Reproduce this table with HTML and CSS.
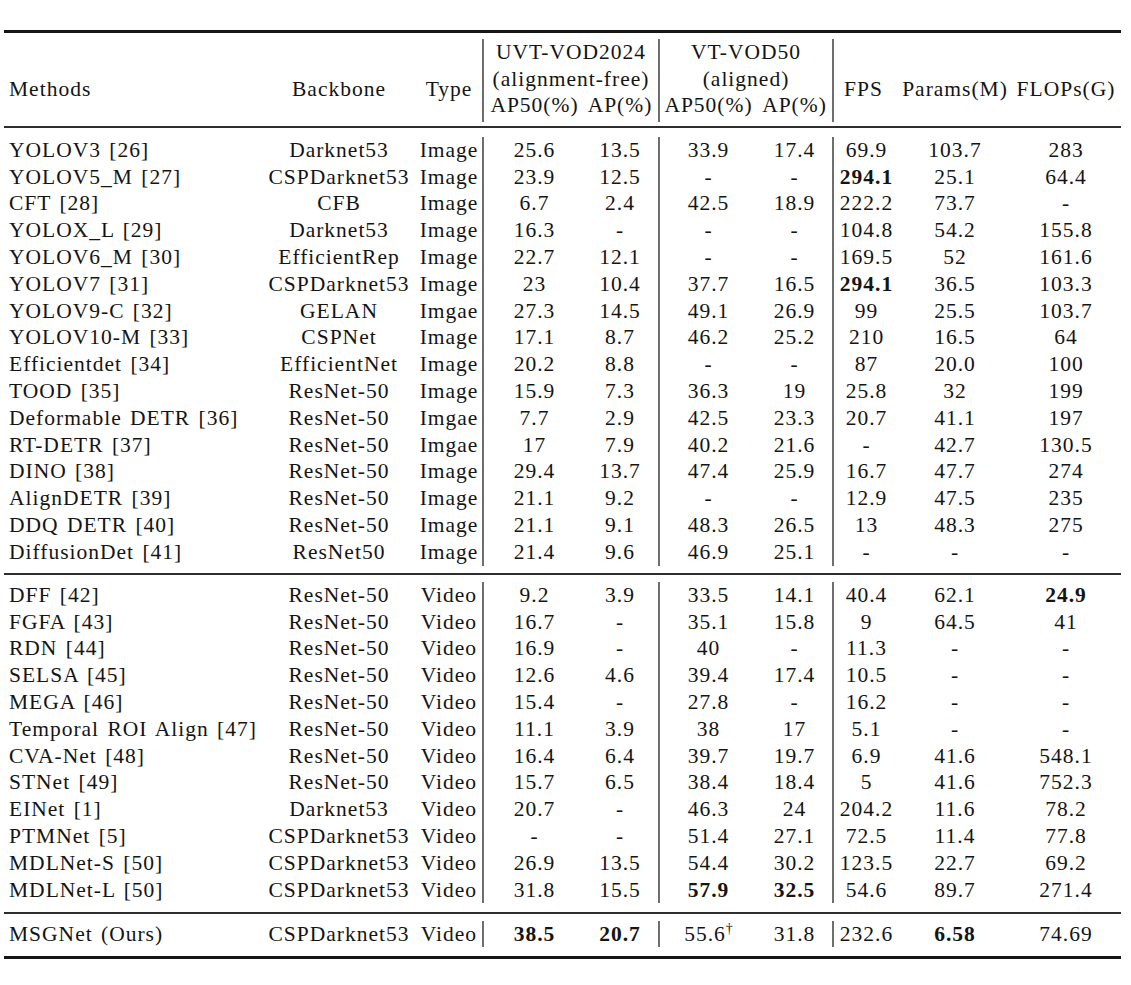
FILE: index.html
```html
<!DOCTYPE html>
<html lang="en">
<head>
<meta charset="utf-8">
<title>Comparison table</title>
<link rel="stylesheet" href="styles.css">
</head>
<body>
<div class="table">
  <div class="rule-heavy"></div>

  <div class="head">
    <div class="h-span c1">Methods</div>
    <div class="h-span c2">Backbone</div>
    <div class="h-span c3 vl">Type</div>
    <div class="h-grp g1 r1 vl">UVT-VOD2024</div>
    <div class="h-grp g1 r2 vl">(alignment-free)</div>
    <div class="h-sub c4 r3">AP50(%)</div>
    <div class="h-sub c5 r3 vl">AP(%)</div>
    <div class="h-grp g2 r1 vl">VT-VOD50</div>
    <div class="h-grp g2 r2 vl">(aligned)</div>
    <div class="h-sub c6 r3">AP50(%)</div>
    <div class="h-sub c7 r3 vl">AP(%)</div>
    <div class="h-span c8 fps">FPS</div>
    <div class="h-span c9">Params(M)</div>
    <div class="h-span c10">FLOPs(G)</div>
  </div>

  <div class="rule-mid"></div>

  <div class="section s-image">
    <div class="row"><div class="m">YOLOV3 [26]</div><div>Darknet53</div><div class="vl">Image</div><div>25.6</div><div class="vl ap">13.5</div><div>33.9</div><div class="vl">17.4</div><div>69.9</div><div>103.7</div><div>283</div></div>
    <div class="row"><div class="m">YOLOV5_M [27]</div><div>CSPDarknet53</div><div class="vl">Image</div><div>23.9</div><div class="vl ap">12.5</div><div>-</div><div class="vl">-</div><div class="b">294.1</div><div>25.1</div><div>64.4</div></div>
    <div class="row"><div class="m">CFT [28]</div><div>CFB</div><div class="vl">Image</div><div>6.7</div><div class="vl ap">2.4</div><div>42.5</div><div class="vl">18.9</div><div>222.2</div><div>73.7</div><div>-</div></div>
    <div class="row"><div class="m">YOLOX_L [29]</div><div>Darknet53</div><div class="vl">Image</div><div>16.3</div><div class="vl ap">-</div><div>-</div><div class="vl">-</div><div>104.8</div><div>54.2</div><div>155.8</div></div>
    <div class="row"><div class="m">YOLOV6_M [30]</div><div>EfficientRep</div><div class="vl">Image</div><div>22.7</div><div class="vl ap">12.1</div><div>-</div><div class="vl">-</div><div>169.5</div><div>52</div><div>161.6</div></div>
    <div class="row"><div class="m">YOLOV7 [31]</div><div>CSPDarknet53</div><div class="vl">Image</div><div>23</div><div class="vl ap">10.4</div><div>37.7</div><div class="vl">16.5</div><div class="b">294.1</div><div>36.5</div><div>103.3</div></div>
    <div class="row"><div class="m">YOLOV9-C [32]</div><div>GELAN</div><div class="vl">Imgae</div><div>27.3</div><div class="vl ap">14.5</div><div>49.1</div><div class="vl">26.9</div><div>99</div><div>25.5</div><div>103.7</div></div>
    <div class="row"><div class="m">YOLOV10-M [33]</div><div>CSPNet</div><div class="vl">Image</div><div>17.1</div><div class="vl ap">8.7</div><div>46.2</div><div class="vl">25.2</div><div>210</div><div>16.5</div><div>64</div></div>
    <div class="row"><div class="m">Efficientdet [34]</div><div>EfficientNet</div><div class="vl">Image</div><div>20.2</div><div class="vl ap">8.8</div><div>-</div><div class="vl">-</div><div>87</div><div>20.0</div><div>100</div></div>
    <div class="row"><div class="m">TOOD [35]</div><div>ResNet-50</div><div class="vl">Image</div><div>15.9</div><div class="vl ap">7.3</div><div>36.3</div><div class="vl">19</div><div>25.8</div><div>32</div><div>199</div></div>
    <div class="row"><div class="m">Deformable DETR [36]</div><div>ResNet-50</div><div class="vl">Imgae</div><div>7.7</div><div class="vl ap">2.9</div><div>42.5</div><div class="vl">23.3</div><div>20.7</div><div>41.1</div><div>197</div></div>
    <div class="row"><div class="m">RT-DETR [37]</div><div>ResNet-50</div><div class="vl">Imgae</div><div>17</div><div class="vl ap">7.9</div><div>40.2</div><div class="vl">21.6</div><div>-</div><div>42.7</div><div>130.5</div></div>
    <div class="row"><div class="m">DINO [38]</div><div>ResNet-50</div><div class="vl">Image</div><div>29.4</div><div class="vl ap">13.7</div><div>47.4</div><div class="vl">25.9</div><div>16.7</div><div>47.7</div><div>274</div></div>
    <div class="row"><div class="m">AlignDETR [39]</div><div>ResNet-50</div><div class="vl">Image</div><div>21.1</div><div class="vl ap">9.2</div><div>-</div><div class="vl">-</div><div>12.9</div><div>47.5</div><div>235</div></div>
    <div class="row"><div class="m">DDQ DETR [40]</div><div>ResNet-50</div><div class="vl">Image</div><div>21.1</div><div class="vl ap">9.1</div><div>48.3</div><div class="vl">26.5</div><div>13</div><div>48.3</div><div>275</div></div>
    <div class="row"><div class="m">DiffusionDet [41]</div><div>ResNet50</div><div class="vl">Image</div><div>21.4</div><div class="vl ap">9.6</div><div>46.9</div><div class="vl">25.1</div><div>-</div><div>-</div><div>-</div></div>
  </div>

  <div class="rule-mid"></div>

  <div class="section s-video">
    <div class="row"><div class="m">DFF [42]</div><div>ResNet-50</div><div class="vl">Video</div><div>9.2</div><div class="vl ap">3.9</div><div>33.5</div><div class="vl">14.1</div><div>40.4</div><div>62.1</div><div class="b">24.9</div></div>
    <div class="row"><div class="m">FGFA [43]</div><div>ResNet-50</div><div class="vl">Video</div><div>16.7</div><div class="vl ap">-</div><div>35.1</div><div class="vl">15.8</div><div>9</div><div>64.5</div><div>41</div></div>
    <div class="row"><div class="m">RDN [44]</div><div>ResNet-50</div><div class="vl">Video</div><div>16.9</div><div class="vl ap">-</div><div>40</div><div class="vl">-</div><div>11.3</div><div>-</div><div>-</div></div>
    <div class="row"><div class="m">SELSA [45]</div><div>ResNet-50</div><div class="vl">Video</div><div>12.6</div><div class="vl ap">4.6</div><div>39.4</div><div class="vl">17.4</div><div>10.5</div><div>-</div><div>-</div></div>
    <div class="row"><div class="m">MEGA [46]</div><div>ResNet-50</div><div class="vl">Video</div><div>15.4</div><div class="vl ap">-</div><div>27.8</div><div class="vl">-</div><div>16.2</div><div>-</div><div>-</div></div>
    <div class="row"><div class="m">Temporal ROI Align [47]</div><div>ResNet-50</div><div class="vl">Video</div><div>11.1</div><div class="vl ap">3.9</div><div>38</div><div class="vl">17</div><div>5.1</div><div>-</div><div>-</div></div>
    <div class="row"><div class="m">CVA-Net [48]</div><div>ResNet-50</div><div class="vl">Video</div><div>16.4</div><div class="vl ap">6.4</div><div>39.7</div><div class="vl">19.7</div><div>6.9</div><div>41.6</div><div>548.1</div></div>
    <div class="row"><div class="m">STNet [49]</div><div>ResNet-50</div><div class="vl">Video</div><div>15.7</div><div class="vl ap">6.5</div><div>38.4</div><div class="vl">18.4</div><div>5</div><div>41.6</div><div>752.3</div></div>
    <div class="row"><div class="m">EINet [1]</div><div>Darknet53</div><div class="vl">Video</div><div>20.7</div><div class="vl ap">-</div><div>46.3</div><div class="vl">24</div><div>204.2</div><div>11.6</div><div>78.2</div></div>
    <div class="row"><div class="m">PTMNet [5]</div><div>CSPDarknet53</div><div class="vl">Video</div><div>-</div><div class="vl ap">-</div><div>51.4</div><div class="vl">27.1</div><div>72.5</div><div>11.4</div><div>77.8</div></div>
    <div class="row"><div class="m">MDLNet-S [50]</div><div>CSPDarknet53</div><div class="vl">Video</div><div>26.9</div><div class="vl ap">13.5</div><div>54.4</div><div class="vl">30.2</div><div>123.5</div><div>22.7</div><div>69.2</div></div>
    <div class="row"><div class="m">MDLNet-L [50]</div><div>CSPDarknet53</div><div class="vl">Video</div><div>31.8</div><div class="vl ap">15.5</div><div class="b">57.9</div><div class="vl b">32.5</div><div>54.6</div><div>89.7</div><div>271.4</div></div>
  </div>

  <div class="rule-mid"></div>

  <div class="section s-ours">
    <div class="row"><div class="m">MSGNet (Ours)</div><div>CSPDarknet53</div><div class="vl">Video</div><div class="b">38.5</div><div class="vl ap b">20.7</div><div>55.6<sup class="dag">&dagger;</sup></div><div class="vl">31.8</div><div>232.6</div><div class="b">6.58</div><div>74.69</div></div>
  </div>

  <div class="rule-heavy"></div>
</div>
</body>
</html>
```

FILE: styles.css
```css
:root {
  --cols: 258px 154px 68px 101px 75px 97px 77px 65px 112px 110px;
}

html, body {
  margin: 0;
  padding: 0;
  background: #ffffff;
}

body {
  color: #141414;
  font-family: "Liberation Serif", "Times New Roman", serif;
  font-size: 21.5px;
  letter-spacing: 1px;
  word-spacing: 2px;
}

.table {
  margin: 30px 0 0 4px;
  width: 1117px;
}

.rule-heavy {
  height: 3px;
  background: #151515;
}

.rule-mid {
  height: 2px;
  background: #2e2e2e;
}

/* header */
.head {
  display: grid;
  grid-template-columns: var(--cols);
  grid-template-rows: 26.5px 26.5px 30px;
  padding: 6px 0 4px;
  line-height: 26.5px;
  text-align: center;
  white-space: nowrap;
}

.head > div {
  box-sizing: border-box;
}

.h-span {
  grid-row: 1 / 4;
  padding-top: 37px;
}

.h-span.c1 {
  text-align: left;
  padding-left: 5px;
}

.c1 { grid-column: 1; }
.c2 { grid-column: 2; }
.c3 { grid-column: 3; }
.c4 { grid-column: 4; }
.c5 { grid-column: 5; padding-right: 3px; }
.c6 { grid-column: 6; }
.c7 { grid-column: 7; }
.c8 { grid-column: 8; }
.c9 { grid-column: 9; }
.c10 { grid-column: 10; }

.fps { padding-right: 6px; }

.g1 { grid-column: 4 / 6; }
.g2 { grid-column: 6 / 8; }
.r1 { grid-row: 1; }
.r2 { grid-row: 2; }
.r3 { grid-row: 3; }

.vl {
  border-right: 2px solid #6e6e6e;
}

/* body sections */
.s-image { padding: 8.9px 0 7.8px; }
.s-video { padding: 6.4px 0 8.5px; }
.s-ours { padding: 6.8px 0 9px; }

.row {
  display: grid;
  grid-template-columns: var(--cols);
  height: 26.8px;
  line-height: 26.8px;
  text-align: center;
  white-space: nowrap;
}

.row > div {
  box-sizing: border-box;
}

.row > .m {
  text-align: left;
  padding-left: 5px;
}

.row > .ap {
  padding-right: 3px;
}

.b {
  font-weight: 700;
}

.dag {
  font-size: 14px;
  line-height: 0;
  vertical-align: 8px;
  letter-spacing: 0;
}
```
